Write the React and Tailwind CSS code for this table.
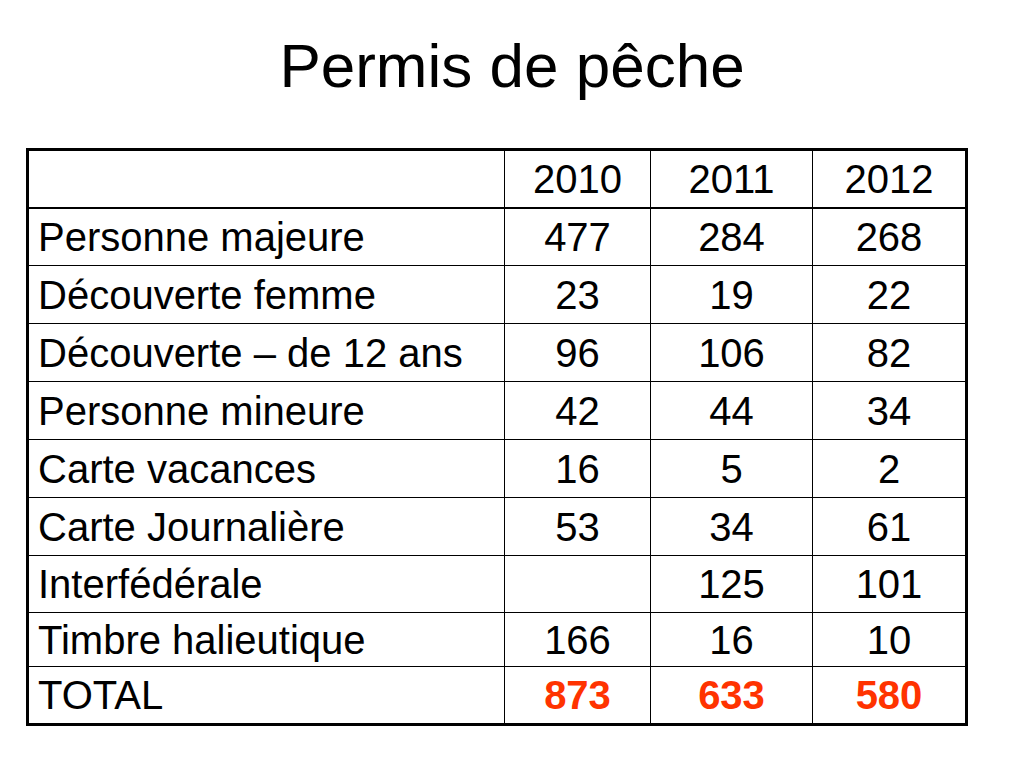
import React from 'react';

const rows = [
  { label: 'Personne majeure', values: ['477', '284', '268'], h: 'h-[58px]' },
  { label: 'Découverte femme', values: ['23', '19', '22'], h: 'h-[58px]' },
  { label: 'Découverte – de 12 ans', values: ['96', '106', '82'], h: 'h-[58px]' },
  { label: 'Personne mineure', values: ['42', '44', '34'], h: 'h-[58px]' },
  { label: 'Carte vacances', values: ['16', '5', '2'], h: 'h-[58px]' },
  { label: 'Carte Journalière', values: ['53', '34', '61'], h: 'h-[58px]' },
  { label: 'Interfédérale', values: ['', '125', '101'], h: 'h-[57px]' },
  { label: 'Timbre halieutique', values: ['166', '16', '10'], h: 'h-[54px]' },
];

const App = () => {
  return (
    <div className="w-[1024px] h-[768px] bg-white text-black font-['Liberation_Sans',Arial,sans-serif] overflow-hidden">
      {/* Title */}
      <div className="pt-[35px] text-center">
        <h1 className="text-[62px] leading-none">Permis de pêche</h1>
      </div>

      {/* Table */}
      <div className="mt-[51px] ml-[26px]">
        <table className="w-[939px] table-fixed border-collapse border-[3px] border-black text-[40px] leading-none">
          <colgroup>
            <col className="w-[477px]" />
            <col className="w-[146px]" />
            <col className="w-[162px]" />
            <col className="w-[154px]" />
          </colgroup>
          <thead>
            <tr className="h-[58px]">
              <th className="border border-black border-b-2 font-normal"></th>
              <th className="border border-black border-b-2 font-normal text-center">2010</th>
              <th className="border border-black border-b-2 font-normal text-center">2011</th>
              <th className="border border-black border-b-2 font-normal text-center">2012</th>
            </tr>
          </thead>
          <tbody>
            {rows.map((row) => (
              <tr key={row.label} className={row.h}>
                <td className="border border-black pl-[9px] text-left whitespace-nowrap">{row.label}</td>
                {row.values.map((v, i) => (
                  <td key={i} className="border border-black text-center">{v}</td>
                ))}
              </tr>
            ))}
            <tr className="h-[58px]">
              <td className="border border-black pl-[9px] text-left">TOTAL</td>
              <td className="border border-black text-center font-bold text-[#ff3300]">873</td>
              <td className="border border-black text-center font-bold text-[#ff3300]">633</td>
              <td className="border border-black text-center font-bold text-[#ff3300]">580</td>
            </tr>
          </tbody>
        </table>
      </div>
    </div>
  );
};

export default App;
